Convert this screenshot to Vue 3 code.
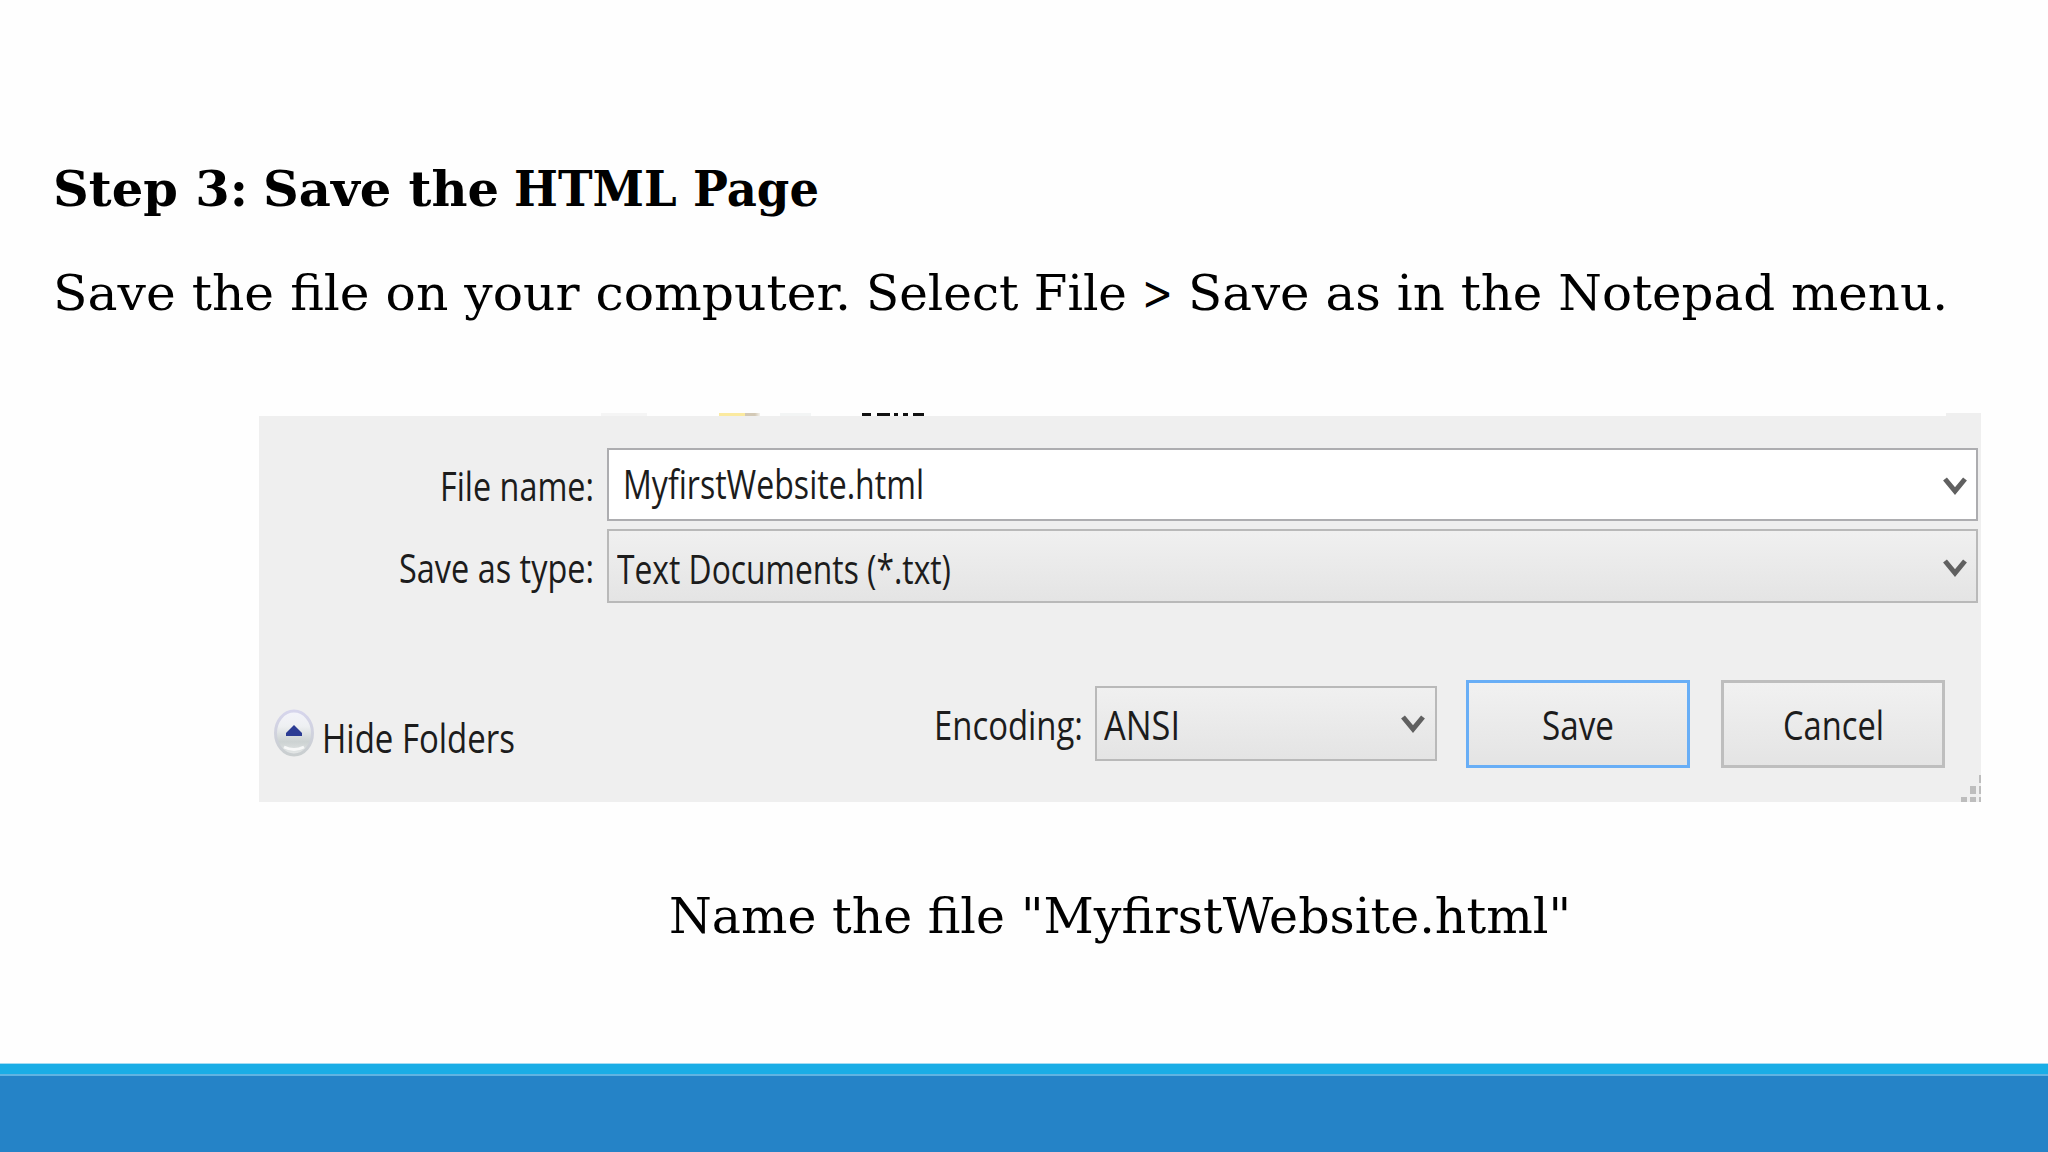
<template>
  <div class="slide">
    <h1 class="serif">
      <span v-fit="195">Step 3:</span>
      <span v-fit="236">Save the</span>
      <span v-fit="305">HTML Page</span>
    </h1>
    <p class="serif intro">
      <span v-fit="798">Save the file on your computer.</span>
      <span v-fit="261">Select File</span>
      <span v-fit="31">&gt;</span>
      <span v-fit="760">Save as in the Notepad menu.</span>
    </p>

    <div class="dialog">
      <!-- last pixels of the file list above the form -->
      <div class="remains">
        <i class="scroll"></i>
        <i class="folder"></i>
        <i class="sheet"></i>
        <svg class="cut" width="64" height="4" viewBox="0 0 64 4">
          <path d="M1 1.5H10M16 1.5H29M33 1.5H37M42 1.5H47M52 1.5H63" stroke="#111" stroke-width="3" />
        </svg>
        <i class="corner"></i>
      </div>

      <div class="form">
        <div class="row">
          <label><span v-fit="154">File name:</span></label>
          <div class="box input">
            <span v-fit="301">MyfirstWebsite.html</span>
            <svg class="arrow" width="24" height="20" viewBox="0 0 24 20"><path d="M2 3L12 15L22 3" /></svg>
          </div>
        </div>
        <div class="row second">
          <label><span v-fit="195">Save as type:</span></label>
          <div class="box select">
            <span v-fit="334">Text Documents (*.txt)</span>
            <svg class="arrow" width="24" height="20" viewBox="0 0 24 20"><path d="M2 3L12 15L22 3" /></svg>
          </div>
        </div>

        <div class="actions">
          <div class="hide">
            <svg width="40" height="48" viewBox="0 0 40 48">
              <defs>
                <linearGradient id="ball" x1="0" y1="0" x2="0" y2="1">
                  <stop offset="0" stop-color="#f4f4fb" />
                  <stop offset="0.35" stop-color="#eef0f2" />
                  <stop offset="0.7" stop-color="#ccd2d2" />
                  <stop offset="1" stop-color="#e6e9e9" />
                </linearGradient>
                <linearGradient id="rim" x1="0" y1="0" x2="0" y2="1">
                  <stop offset="0" stop-color="#d6d5ec" />
                  <stop offset="1" stop-color="#c9cecf" />
                </linearGradient>
              </defs>
              <ellipse cx="20" cy="24" rx="18.5" ry="22" fill="url(#ball)" stroke="url(#rim)" stroke-width="3" />
              <path d="M10 38Q20 43 30 38" fill="none" stroke="#f7f8f8" stroke-width="3" />
              <path d="M12 27V24L20 16L28 24V27Z" fill="#2c3c94" />
            </svg>
            <span v-fit="193">Hide Folders</span>
          </div>
          <div class="encoding">
            <span v-fit="149">Encoding:</span>
            <div class="box select small">
              <span v-fit="76">ANSI</span>
              <svg class="arrow" width="24" height="20" viewBox="0 0 24 20"><path d="M2 3L12 15L22 3" /></svg>
            </div>
          </div>
          <button class="primary"><span v-fit="72">Save</span></button>
          <button><span v-fit="101">Cancel</span></button>
        </div>
      </div>

      <svg class="grip" width="22" height="27" viewBox="0 0 22 27">
        <path d="M20 0h2v8h-2zM11 11h6v8h-6zM20 11h2v8h-2zM2 22h6v5h-6zM11 22h6v5h-6zM20 22h2v5h-2z" fill="#bdbdbd" />
      </svg>
    </div>

    <p class="serif caption">
      <span v-fit="336">Name the file</span>
      <span v-fit="550">"MyfirstWebsite.html"</span>
    </p>

    <footer></footer>
  </div>
</template>

<script setup>
// squeezes or stretches a line of text to the given width
const vFit = {
  mounted(el, { value }) {
    const scale = value / el.getBoundingClientRect().width
    el.style.width = value + "px"
    el.style.transform = `scaleX(${scale})`
  }
}
</script>

<style>
body {
  background: #fefefe;
  overflow: hidden;
}
</style>

<style scoped>
.slide {
  box-sizing: border-box;
  width: 2048px;
  height: 1152px;
  padding-top: 159px;
  display: flex;
  flex-direction: column;
  overflow: hidden;
  background: #fefefe;
  color: #000;
}

span {
  display: inline-block;
  flex: none;
  text-align: left;
  white-space: nowrap;
  transform-origin: 0 50%;
}

.serif {
  display: flex;
  gap: 15px;
  margin: 0 0 0 53px;
  height: 60px;
  line-height: 60px;
  font-family: "DejaVu Serif", serif;
  font-size: 49px;
}

h1.serif {
  font-weight: bold;
}

.serif.intro {
  margin-top: 45px;
}

.serif.caption {
  gap: 16px;
  margin: 85px 0 0 669px;
}

.dialog {
  position: relative;
  width: 1722px;
  height: 389px;
  margin: 89px 0 0 259px;
  font-family: "Open Sans", "Noto Sans", sans-serif;
  font-size: 41px;
  color: #1c1c1c;
}

.remains {
  display: flex;
  height: 3px;
  overflow: hidden;
}

.remains i {
  height: 3px;
}

.scroll {
  width: 46px;
  margin-left: 342px;
  background: #f5f5f5;
}

.folder {
  width: 41px;
  margin-left: 72px;
  background: linear-gradient(90deg, #fbeaa0 0 26px, #d3c9b6 26px 36px, #f3f1ec);
}

.sheet {
  width: 31px;
  margin-left: 20px;
  background: #f3f5f5;
}

.cut {
  margin-left: 50px;
}

.corner {
  width: 35px;
  margin-left: auto;
  background: #efefef;
}

.form {
  box-sizing: border-box;
  height: 386px;
  padding: 32px 3px 0 14px;
  background: #efefef;
}

.row {
  display: flex;
  height: 73px;
  line-height: 75px;
}

.row.second {
  height: 74px;
  margin-top: 8px;
  line-height: 77px;
}

label {
  display: flex;
  justify-content: flex-end;
  width: 321px;
  margin-right: 13px;
}

.box {
  box-sizing: border-box;
  display: flex;
  align-items: center;
  justify-content: space-between;
  flex: 1;
  height: 100%;
  padding: 3px 9px 0 8px;
  border: 2px solid #adadb0;
  line-height: 66px;
}

.input {
  padding: 0 9px 4px 14px;
  background: #fff;
}

.input .arrow {
  margin-top: 7px;
}

.select {
  border-color: #b9b9b9;
  background: linear-gradient(#f0f0f0, #e4e4e4);
}

.arrow path {
  fill: none;
  stroke: #606060;
  stroke-width: 5;
}

.actions {
  display: flex;
  align-items: center;
  height: 88px;
  margin-top: 77px;
  padding-right: 33px;
}

.hide,
.encoding {
  display: flex;
  align-items: center;
}

.hide {
  gap: 8px;
  margin: 17px 0 0 1px;
}

.hide span {
  padding-top: 9px;
}

.encoding {
  gap: 12px;
  margin: -1px 29px 0 auto;
}

.small {
  flex: none;
  width: 342px;
  height: 75px;
  padding: 1px 10px 0 7px;
}

button {
  box-sizing: border-box;
  width: 224px;
  height: 88px;
  padding: 0;
  border: 3px solid #bebebe;
  background: linear-gradient(#f1f1f1, #e4e4e4);
  color: inherit;
  font: inherit;
}

button.primary {
  margin-right: 31px;
  border-color: #68aef6;
}

.grip {
  position: absolute;
  right: 0;
  bottom: 0;
}

footer {
  box-sizing: border-box;
  height: 89px;
  margin-top: auto;
  background: linear-gradient(#a5dcf3 0 1px, #1aade6 1px 11px, #60b3e2 11px 13px, #2583c7 13px);
}
</style>
